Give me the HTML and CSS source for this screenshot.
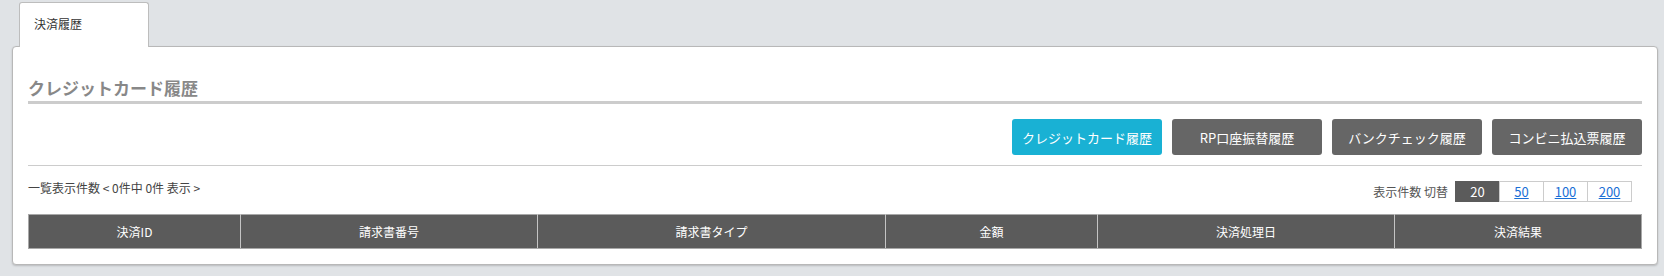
FILE: index.html
```html
<!DOCTYPE html>
<html lang="ja">
<head>
<meta charset="utf-8">
<title>決済履歴</title>
<link rel="stylesheet" href="styles.css">
</head>
<body>
<div class="tabs">
  <div class="tab">決済履歴</div>
</div>
<div class="panel">
  <h2 class="heading">クレジットカード履歴</h2>
  <div class="btn-row">
    <a class="btn btn-active">クレジットカード履歴</a>
    <a class="btn">RP口座振替履歴</a>
    <a class="btn">バンクチェック履歴</a>
    <a class="btn">コンビニ払込票履歴</a>
  </div>
  <div class="info-row">
    <div class="count">一覧表示件数 &lt; 0件中 0件 表示 &gt;</div>
    <div class="pager">
      <span class="pager-label">表示件数 切替</span>
      <span class="cell cell-active">20</span><a class="cell" href="#">50</a><a class="cell" href="#">100</a><a class="cell" href="#">200</a>
    </div>
  </div>
  <table class="list">
    <thead>
      <tr>
        <th class="c1">決済ID</th>
        <th class="c2">請求書番号</th>
        <th class="c3">請求書タイプ</th>
        <th class="c4">金額</th>
        <th class="c5">決済処理日</th>
        <th class="c6">決済結果</th>
      </tr>
    </thead>
  </table>
</div>
</body>
</html>
```

FILE: styles.css
```css
* { box-sizing: border-box; }
html, body { margin: 0; padding: 0; }
body {
  background: #e0e3e6;
  font-family: "Noto Sans CJK JP", "Noto Sans", sans-serif;
  color: #333;
  width: 1664px;
  height: 276px;
  overflow: hidden;
}
.tabs {
  padding: 2px 0 0 19px;
  position: relative;
  z-index: 2;
  height: 46px;
}
.tab {
  width: 130px;
  height: 45px;
  background: #fff;
  border: 1px solid #bdbdbd;
  border-bottom: none;
  border-radius: 3px 3px 0 0;
  padding: 12px 0 0 14px;
  font-size: 12px;
  line-height: 18px;
  color: #333;
}
.panel {
  position: relative;
  z-index: 1;
  margin-left: 12px;
  width: 1646px;
  background: #fff;
  border: 1px solid #b8b8b8;
  border-radius: 4px;
  box-shadow: 0 1px 2px rgba(0,0,0,0.18);
  padding: 29px 15px 15px 15px;
}
.heading {
  margin: 0;
  font-size: 17px;
  font-weight: bold;
  line-height: 24px;
  color: #888;
  padding-bottom: 1px;
  border-bottom: 3px solid #cccccc;
}
.btn-row {
  display: flex;
  justify-content: flex-end;
  gap: 10px;
  margin-top: 15px;
  padding-bottom: 10px;
  border-bottom: 1px solid #cccccc;
}
.btn {
  width: 150px;
  height: 36px;
  display: flex;
  align-items: center;
  justify-content: center;
  background: #666;
  color: #fff;
  font-size: 13px;
  border-radius: 3px;
  text-decoration: none;
}
.btn-active { background: #19b1d4; }
.info-row {
  display: flex;
  justify-content: space-between;
  align-items: flex-start;
}
.count {
  margin-top: 13px;
  font-size: 12px;
  line-height: 18px;
  color: #444;
}
.pager {
  margin-top: 15px;
  margin-right: 10px;
  display: flex;
  align-items: center;
  font-size: 12px;
}
.pager-label {
  color: #555;
  margin-right: 7px;
}
.cell {
  width: 45px;
  height: 21px;
  display: flex;
  align-items: center;
  justify-content: center;
  border: 1px solid #cccccc;
  margin-left: -1px;
  color: #1a6fd6;
  text-decoration: underline;
  font-size: 13px;
  background: #fff;
}
.cell-active {
  background: #5b5b5b;
  border-color: #5b5b5b;
  color: #fff;
  text-decoration: none;
  margin-left: 0;
}
.list {
  margin-top: 12px;
  width: 100%;
  border-collapse: collapse;
  table-layout: fixed;
}
.list th {
  background: #5b5b5b;
  color: #fff;
  font-weight: normal;
  font-size: 12px;
  height: 34px;
  padding: 0;
  border: 1px solid #a8a8a8;
  border-left-color: #c4c4c4;
  border-right-color: #c4c4c4;
}
.list th.c1 { width: 212px; border-left-color: #a8a8a8; }
.list th.c2 { width: 297px; }
.list th.c3 { width: 348px; }
.list th.c4 { width: 212px; }
.list th.c5 { width: 297px; }
.list th.c6 { border-right-color: #a8a8a8; }
```
